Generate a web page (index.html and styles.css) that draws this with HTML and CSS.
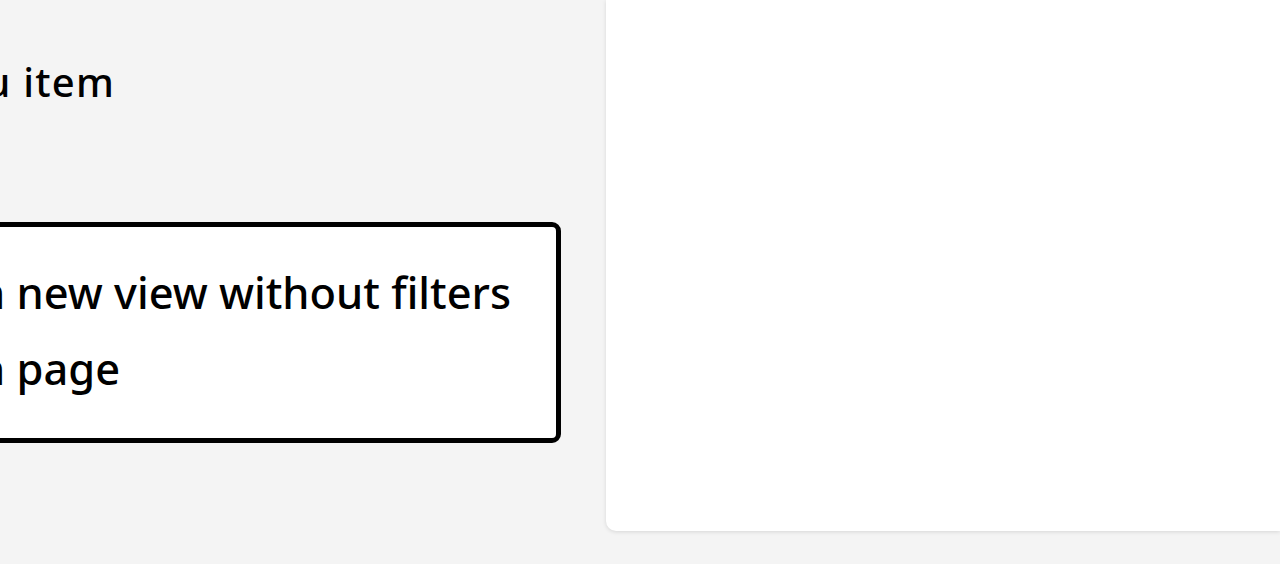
FILE: index.html
```html
<!DOCTYPE html>
<html>
<head>
<meta charset="utf-8">
<link rel="stylesheet" href="styles.css">
</head>
<body>
<div class="page">
  <div class="left">
    <div class="menu-item">Menu item</div>
    <div class="box">
      <div class="line">Open in new view without filters</div>
      <div class="line">Open in page</div>
    </div>
  </div>
  <div class="panel"></div>
</div>
</body>
</html>
```
FILE: styles.css
```css
html, body {
  margin: 0;
  padding: 0;
  background: #f4f4f4;
  height: 100%;
  overflow: hidden;
}
.page {
  display: flex;
  height: 564px;
  font-family: "Noto Sans", sans-serif;
  font-weight: 500;
  color: #000;
}
.left {
  width: 606px;
  flex: none;
  overflow: hidden;
  position: relative;
}
.menu-item {
  font-size: 40px;
  letter-spacing: 1.2px;
  margin-left: -103px;
  margin-top: 57px;
  line-height: 50px;
  white-space: nowrap;
}
.box {
  margin-top: 115px;
  margin-left: -200px;
  width: 761px;
  height: 221px;
  box-sizing: border-box;
  border: 5px solid #000;
  border-radius: 9px;
  background: #fff;
  padding: 28px 0 0 0;
}
.line {
  font-size: 43.4px;
  line-height: 76px;
  white-space: nowrap;
  margin-left: 37px;
}
.panel {
  flex: 1;
  height: 531px;
  background: #fff;
  border-bottom-left-radius: 10px;
  box-shadow: 0 1px 4px rgba(0,0,0,0.12);
}
```
